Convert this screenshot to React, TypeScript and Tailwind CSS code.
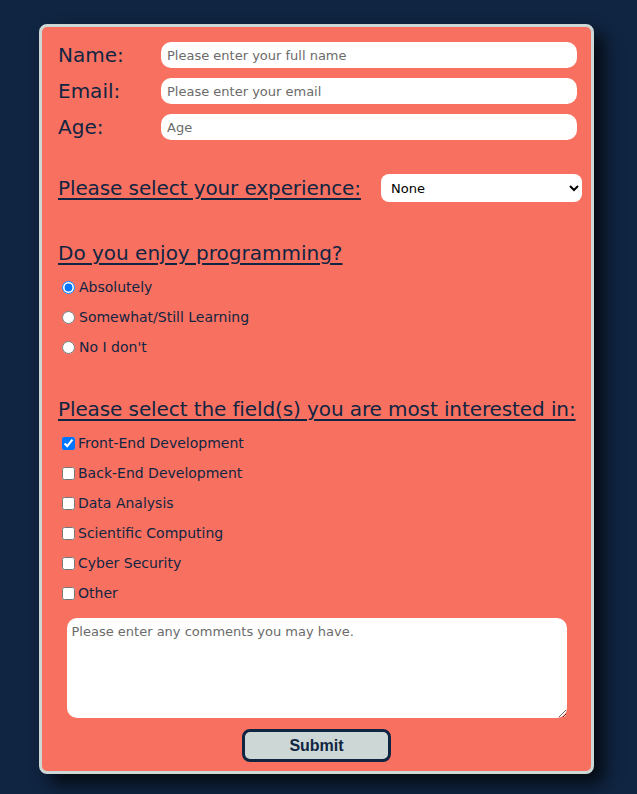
const radios = ["Absolutely", "Somewhat/Still Learning", "No I don't"];
const fields = [
  "Front-End Development",
  "Back-End Development",
  "Data Analysis",
  "Scientific Computing",
  "Cyber Security",
  "Other",
];

const App = () => {
  return (
    <div className="min-h-[794px] bg-[#102542] pt-[24px] pb-[20px] font-['DejaVu_Sans',sans-serif] text-[#102542]">
      <form className="ml-[39px] w-[555px] rounded-[8px] border-[3px] border-[#cdd7d6] bg-[#f87060] px-[16px] pt-[15px] pb-[9px] shadow-[10px_10px_18px_rgba(0,0,0,0.75)]">
        <div className="flex flex-col gap-[10px]">
          {[
            ["Name:", "Please enter your full name"],
            ["Email:", "Please enter your email"],
            ["Age:", "Age"],
          ].map(([label, ph], i) => (
            <div key={i} className="flex items-center">
              <label className="w-[103px] shrink-0 text-[20px] leading-none">{label}</label>
              <input
                placeholder={ph}
                className="h-[26px] w-[416px] shrink-0 rounded-[10px] bg-white px-[6px] text-[13px] placeholder:text-[#6b6b6b]"
              />
            </div>
          ))}
        </div>

        <div className="mt-[34px] flex items-center justify-between">
          <span className="text-[20px] leading-none tracking-[-0.1px] underline underline-offset-[3px]">Please select your experience:</span>
          <select className="mr-[-7px] h-[28px] w-[201px] shrink-0 rounded-[8px] bg-white px-[6px] text-[13px] text-black">
            <option>None</option>
          </select>
        </div>

        <h2 className="mt-[39px] flex h-[24px] items-center text-[20px] underline underline-offset-[3px]">
          Do you enjoy programming?
        </h2>
        <div className="mt-[7px] flex flex-col">
          {radios.map((r, i) => (
            <label key={r} className="flex h-[30px] items-center text-[14px]">
              <input type="radio" name="enjoy" defaultChecked={i === 0} className="mx-[4px] h-[13px] w-[13px]" />
              {r}
            </label>
          ))}
        </div>

        <h2 className="mt-[35px] flex h-[24px] items-center whitespace-nowrap text-[20px] tracking-[-0.1px] underline underline-offset-[3px]">
          Please select the field(s) you are most interested in:
        </h2>
        <div className="mt-[7px] flex flex-col">
          {fields.map((f, i) => (
            <label key={f} className="flex h-[30px] items-center text-[14px]">
              <input type="checkbox" defaultChecked={i === 0} className="mx-[4px] mr-[3px] h-[13px] w-[13px]" />
              {f}
            </label>
          ))}
        </div>

        <div className="mt-[10px] flex justify-center">
          <textarea
            placeholder="Please enter any comments you may have."
            className="block h-[100px] w-[500px] rounded-[10px] bg-white px-[5px] py-[4px] text-[13px] placeholder:text-[#6b6b6b]"
          />
        </div>
        <div className="mt-[11px] flex justify-center">
          <button
            type="button"
            className="h-[33px] w-[149px] rounded-[8px] border-[3px] border-[#102542] bg-[#cdd7d6] font-['Liberation_Sans',Arial,sans-serif] text-[16px] font-bold text-[#102542]"
          >
            Submit
          </button>
        </div>
      </form>
    </div>
  );
};

export default App;
